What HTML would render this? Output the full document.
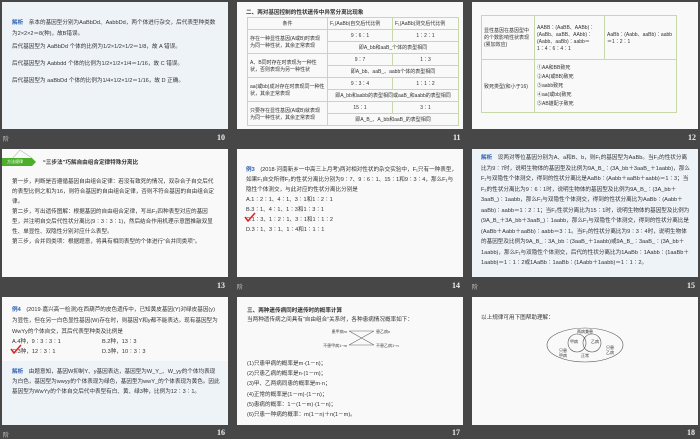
<!DOCTYPE html>
<html><head><meta charset="utf-8"><style>
*{margin:0;padding:0;box-sizing:border-box}
body{width:700px;height:438px;background:#474747;position:relative;overflow:hidden;font-family:"Liberation Sans","Noto Sans CJK SC",sans-serif;color:#333}
.s{position:absolute;background:#f9f9f9;overflow:hidden}
.t{position:absolute;font-size:5.6px;line-height:6px;white-space:nowrap;color:#333}
.b{color:#2a5db0;font-weight:bold}
.n{position:absolute;color:#eee;font-size:8px;font-weight:bold;font-family:"Liberation Serif",serif}
.j{position:absolute;color:#ccc;font-size:6px}
table{position:absolute;border-collapse:collapse;font-size:5px;color:#333}
td{border:1px solid #c9d8a8;padding:0 2px;height:12px;white-space:nowrap}
</style></head><body>

<!-- slide 10 -->
<div class="s" style="left:2px;top:2px;width:226px;height:127px;background:#eef3f8">
<div class="t" style="left:10px;top:18px"><span class="b">解析</span>　亲本的基因型分别为AaBbDd、AabbDd，两个体进行杂交，后代表型种类数</div>
<div class="t" style="left:10px;top:29px">为2×2×2＝8(种)，故B错误。</div>
<div class="t" style="left:10px;top:42px">后代基因型为 AaBbDd 个体的比例为1/2×1/2×1/2＝1/8，故 A 错误。</div>
<div class="t" style="left:10px;top:59px">后代基因型为 Aabbdd 个体的比例为1/2×1/2×1/4＝1/16，故 C 错误。</div>
<div class="t" style="left:10px;top:76px">后代基因型为 aaBbDd 个体的比例为1/4×1/2×1/2＝1/16，故 D 正确。</div>
</div>
<div class="j" style="left:3px;top:134px">阶</div><div class="n" style="left:217px;top:133px">10</div>

<!-- slide 11 -->
<div class="s" style="left:237px;top:2px;width:226px;height:127px">
<div class="t" style="left:9px;top:8px;font-weight:bold">二、两对基因控制的性状遗传中异常分离比现象</div>
<table style="left:10px;top:15px;width:212px">
<tr><td style="width:80px;text-align:center">条件</td><td style="width:65px">F₁(AaBb)自交后代比例</td><td>F₁(AaBb)测交后代比例</td></tr>
<tr><td rowspan="2">存在一种显性基因(A或B)时表现<br>为同一种性状，其余正常表现</td><td style="text-align:center">9∶6∶1</td><td style="text-align:center">1∶2∶1</td></tr>
<tr><td colspan="2" style="text-align:center">即A_bb和aaB_个体的表型相同</td></tr>
<tr><td rowspan="2">A、B同时存在时表现为一种性<br>状，否则表现为另一种性状</td><td style="text-align:center">9∶7</td><td style="text-align:center">1∶3</td></tr>
<tr><td colspan="2" style="text-align:center">即A_bb、aaB_、aabb个体的表型相同</td></tr>
<tr><td rowspan="2">aa(或bb)成对存在时表现同一种性<br>状，其余正常表现</td><td style="text-align:center">9∶3∶4</td><td style="text-align:center">1∶1∶2</td></tr>
<tr><td colspan="2" style="text-align:center">即A_bb和aabb的表型相同或aaB_和aabb的表型相同</td></tr>
<tr><td rowspan="2">只要存在显性基因(A或B)就表现<br>为同一种性状，其余正常表现</td><td style="text-align:center">15∶1</td><td style="text-align:center">3∶1</td></tr>
<tr><td colspan="2" style="text-align:center">即A_B_、A_bb和aaB_的表型相同</td></tr>
</table>
</div>
<div class="n" style="left:453px;top:133px">11</div>

<!-- slide 12 -->
<div class="s" style="left:472px;top:2px;width:226px;height:127px">
<table style="left:9px;top:13px;width:196px">
<tr><td style="width:53px;height:44px">显性基因在基因型中<br>的个数影响性状表现<br>(累加效应)</td><td style="width:70px">AABB∶(AaBB、AABb)∶<br>(AaBb、aaBB、AAbb)∶<br>(Aabb、aaBb)∶aabb＝<br>1∶4∶6∶4∶1</td><td>AaBb∶(Aabb、aaBb)∶aabb<br>＝1∶2∶1</td></tr>
<tr><td style="height:53px">致死类型(和小于16)</td><td colspan="2" style="line-height:9px">①AA和BB致死<br>②AA(或BB)致死<br>③aabb致死<br>④aa(或bb)致死<br>⑤AB雄配子致死</td></tr>
</table>
</div>
<div class="n" style="left:688px;top:133px">12</div>

<!-- slide 13 -->
<div class="s" style="left:2px;top:149px;width:226px;height:128px">
<svg style="position:absolute;left:0;top:0" width="40" height="20"><path d="M8 12 L18 1 L30 9" stroke="#bbb" fill="none" stroke-width=".6"/><polygon points="0,9 30,9 34,13 30,17 0,17" fill="#4caf2a"/></svg>
<div class="t" style="left:5px;top:10px;color:#fff;font-size:4px">方法规律</div>
<div class="t" style="left:41px;top:11px;font-weight:bold">“三步法”巧解自由组合定律特殊分离比</div>
<div class="t" style="left:10px;top:28px;line-height:10px;white-space:normal;width:205px">第一步，判断是否遵循基因自由组合定律：若没有致死的情况，双杂合子自交后代的表型比例之和为16，则符合基因的自由组合定律，否则不符合基因的自由组合定律。<br>第二步，写出遗传图解：根据基因的自由组合定律，写出F₂四种表型对应的基因型，并注明自交后代性状分离比(9∶3∶3∶1)，然后结合作用机理示意图推敲双显性、单显性、双隐性分别对应什么表型。<br>第三步，合并同类项：根据题意，将具有相同表型的个体进行“合并同类项”。</div>
</div>
<div class="n" style="left:217px;top:281px">13</div>

<!-- slide 14 -->
<div class="s" style="left:237px;top:149px;width:226px;height:128px">
<div class="t" style="left:9px;top:18px"><span class="b">例3</span>　(2018·河南新乡一中高三上月考)两对相对性状的杂交实验中，F₁只有一种表型，</div>
<div class="t" style="left:9px;top:28px">如果F₁自交所得F₂的性状分离比分别为9∶7、9∶6∶1、15∶1和9∶3∶4，那么F₁与</div>
<div class="t" style="left:9px;top:38px">隐性个体测交，与此对应的性状分离比分别是</div>
<div class="t" style="left:9px;top:48px">A.1∶2∶1、4∶1、3∶1和1∶2∶1</div>
<div class="t" style="left:9px;top:58px">B.3∶1、4∶1、1∶3和1∶3∶1</div>
<div class="t" style="left:9px;top:68px">C.1∶3、1∶2∶1、3∶1和1∶1∶2</div>
<div class="t" style="left:9px;top:78px">D.3∶1、3∶1、1∶4和1∶1∶1</div>
<svg style="position:absolute;left:7px;top:63px" width="12" height="10"><path d="M1 5 L4 9 L11 1" stroke="#d22" stroke-width="1.5" fill="none"/></svg>
</div>
<div class="j" style="left:237px;top:282px">阶</div><div class="n" style="left:452px;top:281px">14</div>

<!-- slide 15 -->
<div class="s" style="left:472px;top:149px;width:226px;height:128px;background:#eef3f8">
<div class="t" style="left:9px;top:4px;line-height:10.5px;white-space:normal;width:210px"><span class="b">解析</span>　设两对等位基因分别为A、a和B、b，则F₁的基因型为AaBb。当F₂的性状分离比为9∶7时，说明生物体的基因型及比例为9A_B_∶(3A_bb＋3aaB_＋1aabb)，那么F₁与双隐性个体测交，得到的性状分离比是AaBb∶(Aabb＋aaBb＋aabb)＝1∶3；当F₂的性状分离比为9∶6∶1时，说明生物体的基因型及比例为9A_B_∶(3A_bb＋3aaB_)∶1aabb，那么F₁与双隐性个体测交，得到的性状分离比为AaBb∶(Aabb＋aaBb)∶aabb＝1∶2∶1；当F₂性状分离比为15∶1时，说明生物体的基因型及比例为(9A_B_＋3A_bb＋3aaB_)∶1aabb，那么F₁与双隐性个体测交，得到的性状分离比是(AaBb＋Aabb＋aaBb)∶aabb＝3∶1。当F₂的性状分离比为9∶3∶4时，说明生物体的基因型及比例为9A_B_∶3A_bb∶(3aaB_＋1aabb)或9A_B_∶3aaB_∶(3A_bb＋1aabb)，那么F₁与双隐性个体测交，后代的性状分离比为1AaBb∶1Aabb∶(1aaBb＋1aabb)＝1∶1∶2或1AaBb∶1aaBb∶(1Aabb＋1aabb)＝1∶1∶2。</div>
</div>
<div class="j" style="left:472px;top:282px">阶</div><div class="n" style="left:687px;top:281px">15</div>

<!-- slide 16 -->
<div class="s" style="left:2px;top:297px;width:226px;height:128px">
<div style="position:absolute;left:0;top:64px;width:226px;height:64px;background:#eef3f8"></div>
<div class="t" style="left:10px;top:10px"><span class="b">例4</span>　(2019·嘉兴高一检测)在西葫芦的皮色遗传中，已知黄皮基因(Y)对绿皮基因(y)</div>
<div class="t" style="left:10px;top:21px">为显性，但在另一白色显性基因(W)存在时，则基因Y和y都不能表达。现有基因型为</div>
<div class="t" style="left:10px;top:32px">WwYy的个体自交，其后代表型种类及比例是</div>
<div class="t" style="left:10px;top:42px">A.4种，9∶3∶3∶1</div><div class="t" style="left:100px;top:42px">B.2种，13∶3</div>
<div class="t" style="left:10px;top:52px">C.3种，12∶3∶1</div><div class="t" style="left:100px;top:52px">D.3种，10∶3∶3</div>
<svg style="position:absolute;left:8px;top:47px" width="12" height="10"><path d="M1 5 L4 9 L11 1" stroke="#d22" stroke-width="1.5" fill="none"/></svg>
<div class="t" style="left:10px;top:70px;line-height:10px;white-space:normal;width:208px"><span class="b">解析</span>　由题意知，基因W抑制Y、y基因表达，基因型为W_Y_、W_yy的个体均表现为白色，基因型为wwyy的个体表现为绿色，基因型为wwY_的个体表现为黄色。因此基因型为WwYy的个体自交后代中表型有白、黄、绿3种，比例为12∶3∶1。</div>
</div>
<div class="j" style="left:3px;top:430px">阶</div><div class="n" style="left:217px;top:428px">16</div>

<!-- slide 17 -->
<div class="s" style="left:237px;top:297px;width:226px;height:128px">
<div class="t" style="left:10px;top:11px;font-weight:bold">三、两种遗传病同时遗传时的概率计算</div>
<div class="t" style="left:10px;top:20px">当两种遗传病之间具有“自由组合”关系时，各种患病情况概率如下：</div>
<svg style="position:absolute;left:0;top:30px" width="226" height="30"><path d="M112 4 L137 4 M112 18 L137 18 M112 4 L137 18 M137 4 L112 18" stroke="#666" stroke-width=".6" fill="none"/>
<text x="110" y="6" font-size="4" text-anchor="end" fill="#444">患甲病m</text><text x="139" y="6" font-size="4" fill="#444">患乙病n</text>
<text x="110" y="20" font-size="4" text-anchor="end" fill="#444">不患甲病1−m</text><text x="139" y="20" font-size="4" fill="#444">不患乙病1−n</text></svg>
<div class="t" style="left:10px;top:62px;line-height:10.2px">(1)只患甲病的概率是m·(1－n)；<br>(2)只患乙病的概率是n·(1－m)；<br>(3)甲、乙两病同患的概率是m·n；<br>(4)正常的概率是(1－m)·(1－n)；<br>(5)患病的概率：1－(1－m)·(1－n)；<br>(6)只患一种病的概率：m(1－n)＋n(1－m)。</div>
</div>
<div class="n" style="left:452px;top:428px">17</div>

<!-- slide 18 -->
<div class="s" style="left:472px;top:297px;width:226px;height:128px">
<div class="t" style="left:9px;top:18px">以上规律可用下图帮助理解：</div>
<svg style="position:absolute;left:0;top:0" width="226" height="128"><ellipse cx="113" cy="48" rx="38" ry="17" stroke="#555" fill="none" stroke-width=".6"/><circle cx="105" cy="46" r="9" stroke="#555" fill="none" stroke-width=".6"/><circle cx="120" cy="46" r="9" stroke="#555" fill="none" stroke-width=".6"/>
<text x="113" y="36" font-size="4" text-anchor="middle" fill="#333">两病兼患</text><text x="102" y="46" font-size="4" text-anchor="middle" fill="#333">甲病</text><text x="123" y="46" font-size="4" text-anchor="middle" fill="#333">乙病</text>
<text x="113" y="60" font-size="4" text-anchor="middle" fill="#333">正常</text><text x="91" y="55" font-size="4" text-anchor="middle" fill="#333">只患</text><text x="91" y="60" font-size="4" text-anchor="middle" fill="#333">甲病</text><text x="138" y="52" font-size="4" text-anchor="middle" fill="#333">只患</text><text x="138" y="57" font-size="4" text-anchor="middle" fill="#333">乙病</text></svg>
</div>
<div class="n" style="left:687px;top:428px">18</div>
</body></html>
